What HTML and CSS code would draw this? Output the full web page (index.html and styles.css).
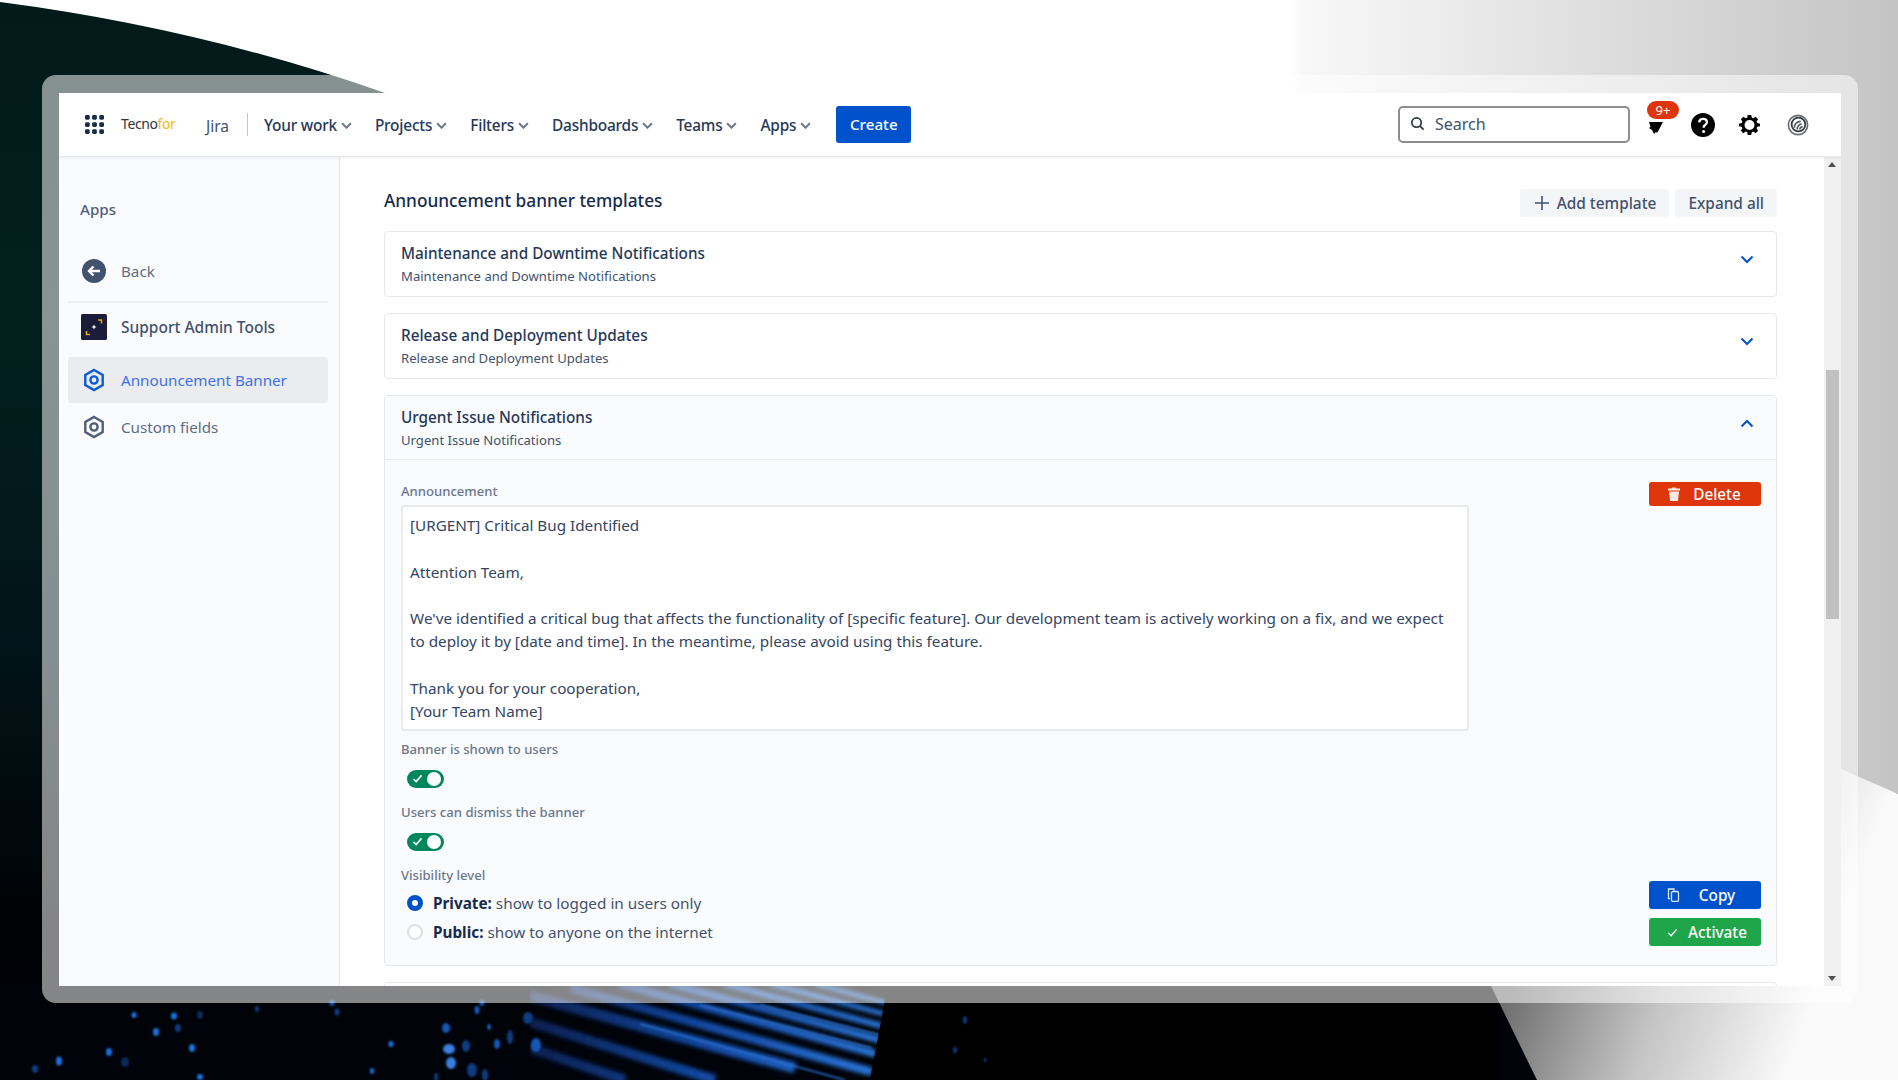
FILE: index.html
```html
<!DOCTYPE html>
<html lang="en">
<head>
<meta charset="utf-8">
<title>Announcement banner templates</title>
<link rel="stylesheet" href="styles.css">
</head>
<body>
<svg class="backdrop" viewBox="0 0 1898 1080" aria-hidden="true">
  <defs>
    <linearGradient id="dark" x1="0" y1="0" x2="0" y2="1">
      <stop offset="0" stop-color="#021a19"/><stop offset=".3" stop-color="#03201f"/>
      <stop offset=".6" stop-color="#021419"/><stop offset=".85" stop-color="#000205"/><stop offset="1" stop-color="#00030a"/>
    </linearGradient>
    <linearGradient id="light" gradientUnits="userSpaceOnUse" x1="1290" y1="0" x2="1898" y2="0">
      <stop offset="0" stop-color="#fff"/><stop offset=".02" stop-color="#f8f8f8"/><stop offset=".5" stop-color="#dedede"/><stop offset="1" stop-color="#c4c4c4"/>
    </linearGradient>
    <linearGradient id="corner" gradientUnits="userSpaceOnUse" x1="1520" y1="960" x2="1790" y2="1060">
      <stop offset="0" stop-color="#6f6f6f"/><stop offset=".5" stop-color="#c4c4c4"/><stop offset="1" stop-color="#f9f9f9"/>
    </linearGradient>
    <linearGradient id="streak" gradientUnits="userSpaceOnUse" x1="530" y1="0" x2="885" y2="0">
      <stop offset="0" stop-color="#071f50"/><stop offset=".5" stop-color="#124aa6"/><stop offset="1" stop-color="#2b78dc"/>
    </linearGradient>
    <clipPath id="streakclip"><polygon points="530,984 888,984 870,1080 530,1080"/></clipPath>
    <filter id="soft"><feGaussianBlur stdDeviation="1"/></filter>
    <filter id="softer"><feGaussianBlur stdDeviation="2"/></filter>
    <filter id="softest"><feGaussianBlur stdDeviation=".8"/></filter>
  </defs>
  <rect width="1898" height="1080" fill="url(#dark)"/>
  <rect x="860" y="960" width="640" height="120" fill="#000"/>
  <path d="M0 2Q200 28 385 93L1000 500L1898 794V0H0Z" fill="url(#light)"/>
  <path d="M1000 500L1841 769L1898 794V1080H1537L1491 986Z" fill="url(#corner)"/>
  <g clip-path="url(#streakclip)" fill="none" stroke="url(#streak)" filter="url(#softer)">
    <path stroke-width="10" d="M530 1048L625 1080"/>
    <path stroke-width="10" d="M530 1022L715 1080"/>
    <path stroke-width="11" d="M530 996L795 1068"/>
    <path stroke-width="9" d="M570 988L872 1072"/>
    <path stroke-width="8" d="M620 984L876 1054"/>
    <path stroke-width="7" d="M670 984L880 1040"/>
    <path stroke-width="6" d="M725 984L882 1026"/>
    <path stroke-width="5" d="M770 984L884 1014"/>
    <path stroke-width="4" d="M815 984L886 1003"/>
  </g>
  <g clip-path="url(#streakclip)" fill="none" stroke="#2f74d4" stroke-width="1.500" filter="url(#softest)">
    <path d="M700 1005L872 1048"/>
    <path d="M760 1005L880 1035"/>
    <path d="M640 1024L845 1080"/>
  </g>
  <g fill="#1a72e0" filter="url(#soft)">
    <ellipse cx="134" cy="1015" rx="2.500" ry="3"/><ellipse cx="174" cy="1016" rx="3" ry="3.500"/>
    <ellipse cx="156" cy="1032" rx="3" ry="4"/><ellipse cx="109" cy="1052" rx="3" ry="4"/>
    <ellipse cx="59" cy="1061" rx="3" ry="4.500"/><ellipse cx="192" cy="1048" rx="3" ry="4"/>
    <ellipse cx="449" cy="1049" rx="6" ry="5" fill="#3b7fe0"/><ellipse cx="451" cy="1063" rx="5" ry="6" fill="#3b7fe0"/>
    <ellipse cx="391" cy="1044" rx="2.500" ry="3"/><ellipse cx="372" cy="1071" rx="2" ry="3"/>
    <ellipse cx="200" cy="1077" rx="3" ry="3"/><ellipse cx="446" cy="1028" rx="4" ry="5" fill="#1458b8"/>
    <ellipse cx="497" cy="1044" rx="3" ry="5" fill="#1458b8"/><ellipse cx="536" cy="1045" rx="5" ry="7" fill="#1458b8"/>
    <ellipse cx="489" cy="1027" rx="1.500" ry="3"/><ellipse cx="477" cy="1010" rx="2.500" ry="4" fill="#1458b8"/>
    <ellipse cx="482" cy="1003" rx="2.500" ry="3" fill="#1458b8"/><ellipse cx="332" cy="1003" rx="2.500" ry="3" fill="#1458b8"/>
  </g>
  <g fill="#0c3c80" filter="url(#soft)">
    <ellipse cx="178" cy="1028" rx="3" ry="4"/><ellipse cx="200" cy="1015" rx="3" ry="4" fill="#0a2a58"/>
    <ellipse cx="257" cy="1009" rx="2" ry="3"/><ellipse cx="337" cy="1012" rx="2.500" ry="3.500"/>
    <ellipse cx="466" cy="1046" rx="4" ry="6"/><ellipse cx="510" cy="1037" rx="3" ry="7"/>
    <ellipse cx="528" cy="1018" rx="5" ry="6"/><ellipse cx="472" cy="1070" rx="5" ry="7"/>
    <ellipse cx="485" cy="1075" rx="3" ry="6"/><ellipse cx="436" cy="1077" rx="2" ry="4"/>
    <ellipse cx="35" cy="1069" rx="3" ry="4"/><ellipse cx="125" cy="1062" rx="4" ry="5" fill="#0a2a58"/>
    <ellipse cx="965" cy="1020" rx="2" ry="4"/><ellipse cx="955" cy="1050" rx="2" ry="3"/><ellipse cx="985" cy="1060" rx="1.500" ry="2"/>
  </g>
</svg>

<div class="frame">
  <header class="topbar">
    <svg class="grid-icon" viewBox="0 0 20 20" aria-hidden="true">
      <g fill="#172b4d"><rect x="0" y="0" width="5" height="5" rx="1.500"/><rect x="7.500" y="0" width="5" height="5" rx="1.500"/><rect x="15" y="0" width="5" height="5" rx="1.500"/><rect x="0" y="7.500" width="5" height="5" rx="1.500"/><rect x="7.500" y="7.500" width="5" height="5" rx="1.500"/><rect x="15" y="7.500" width="5" height="5" rx="1.500"/><rect x="0" y="15" width="5" height="5" rx="1.500"/><rect x="7.500" y="15" width="5" height="5" rx="1.500"/><rect x="15" y="15" width="5" height="5" rx="1.500"/></g>
    </svg>
    <span class="logo">Tecno<span class="logo-for">for</span></span>
    <span class="product">Jira</span>
    <span class="vrule"></span>
    <nav class="nav">
      <span class="nav-item">Your work<svg class="caret" viewBox="0 0 10 6"><path d="M1 1l4 4 4-4"/></svg></span>
      <span class="nav-item">Projects<svg class="caret" viewBox="0 0 10 6"><path d="M1 1l4 4 4-4"/></svg></span>
      <span class="nav-item">Filters<svg class="caret" viewBox="0 0 10 6"><path d="M1 1l4 4 4-4"/></svg></span>
      <span class="nav-item">Dashboards<svg class="caret" viewBox="0 0 10 6"><path d="M1 1l4 4 4-4"/></svg></span>
      <span class="nav-item">Teams<svg class="caret" viewBox="0 0 10 6"><path d="M1 1l4 4 4-4"/></svg></span>
      <span class="nav-item">Apps<svg class="caret" viewBox="0 0 10 6"><path d="M1 1l4 4 4-4"/></svg></span>
    </nav>
    <button class="create">Create</button>
    <div class="search">
      <svg class="search-icon" viewBox="0 0 16 16"><circle cx="7" cy="7" r="5" /><path d="M10.800 10.800L14.500 14.500"/></svg>
      <span>Search</span>
    </div>
    <div class="bell">
      <svg viewBox="0 0 24 24" class="icon-24"><path d="M5 9h14l-5 9.500c-.6 1.200-1.600 1.200-2.200.4L10 21 8 17l-3-2 1.500-1.200z" fill="#000"/></svg>
      <span class="badge">9+</span>
    </div>
    <svg class="help" viewBox="0 0 24 24"><circle cx="12" cy="12" r="12" fill="#000"/><path d="M8.200 9.300C8.400 7 10 5.800 12.100 5.800c2.200 0 3.800 1.400 3.800 3.300 0 1.600-.9 2.400-2 3.100-.9.600-1.200 1-1.200 2v.6" fill="none" stroke="#fff" stroke-width="2.300"/><circle cx="12.600" cy="18.400" r="1.500" fill="#fff"/></svg>
    <svg class="gear" viewBox="0 0 24 24"><path fill="#000" fill-rule="evenodd" d="M10 1h4l.6 3.100 1.800.8L19 3.100 21.900 6l-1.800 2.600.8 1.800L24 11v3l-3.100.6-.8 1.800 1.800 2.600L19 21.900l-2.600-1.800-1.800.8L14 24h-4l-.6-3.100-1.800-.8L5 21.900 2.100 19l1.800-2.600-.8-1.800L0 14v-3l3.100-.6.8-1.800L2.100 6 5 3.100l2.600 1.800 1.800-.8zM12 6.800a5.700 5.700 0 1 0 0 11.400 5.700 5.700 0 0 0 0-11.400z"/></svg>
    <svg class="avatar" viewBox="0 0 24 24" fill="none"><circle cx="12" cy="12" r="10.500" stroke="#6b6f75" stroke-width="1.800"/><circle cx="12.500" cy="11.500" r="7.500" stroke="#3a3d42" stroke-width="2"/><path d="M8 15c0-4 3-7 7-7M11 17c0-3 2-6 5-6M14 17c0-1.500 1-3 3-3" stroke="#55585e" stroke-width="1.800"/></svg>
  </header>

  <div class="workspace">
    <aside class="sidebar">
      <div class="side-title">Apps</div>
      <div class="side-row back-row">
        <svg class="side-icon" viewBox="0 0 24 24"><circle cx="12" cy="12" r="12" fill="#42526e"/><path d="M18 12H7M11.500 7.500L7 12l4.500 4.500" fill="none" stroke="#fff" stroke-width="2.400"/></svg>
        <span>Back</span>
      </div>
      <div class="side-rule"></div>
      <div class="side-row app-row">
        <svg class="app-icon" viewBox="0 0 26 26"><rect width="26" height="26" rx="1.500" fill="#1b1b3a"/><path d="M17 6h3.500v3.500M9 20.500H5.500V17" fill="none" stroke="#e5a50a" stroke-width="1.600"/><path d="M13 10.500l.8 1.700 1.700.8-1.700.8-.8 1.700-.8-1.700-1.700-.8 1.700-.8z" fill="#fff"/></svg>
        <span>Support Admin Tools</span>
      </div>
      <div class="side-row selected">
        <svg class="hex" viewBox="0 0 24 24"><path d="M12 2l8.700 5v10L12 22l-8.700-5V7z"/><circle cx="12" cy="12" r="3.600"/></svg>
        <span>Announcement Banner</span>
      </div>
      <div class="side-row plain">
        <svg class="hex" viewBox="0 0 24 24"><path d="M12 2l8.700 5v10L12 22l-8.700-5V7z"/><circle cx="12" cy="12" r="3.600"/></svg>
        <span>Custom fields</span>
      </div>
    </aside>

    <main class="main">
      <div class="title-row">
        <h1 class="page-title">Announcement banner templates</h1>
        <div class="title-actions">
          <button class="ghost with-icon"><svg class="plus" viewBox="0 0 14 14"><path d="M7 0v14M0 7h14"/></svg>Add template</button>
          <button class="ghost">Expand all</button>
        </div>
      </div>

      <section class="card">
        <div class="card-head">
          <div><div class="card-title">Maintenance and Downtime Notifications</div><div class="card-sub">Maintenance and Downtime Notifications</div></div>
          <svg class="chev" viewBox="0 0 14 9"><path d="M1.500 1.500L7 7l5.500-5.500"/></svg>
        </div>
      </section>
      <section class="card">
        <div class="card-head">
          <div><div class="card-title">Release and Deployment Updates</div><div class="card-sub">Release and Deployment Updates</div></div>
          <svg class="chev" viewBox="0 0 14 9"><path d="M1.500 1.500L7 7l5.500-5.500"/></svg>
        </div>
      </section>
      <section class="card open">
        <div class="card-head">
          <div><div class="card-title">Urgent Issue Notifications</div><div class="card-sub">Urgent Issue Notifications</div></div>
          <svg class="chev" viewBox="0 0 14 9"><path d="M1.500 7.500L7 2l5.500 5.500"/></svg>
        </div>
        <div class="card-body">
          <div class="form">
            <div class="field-label">Announcement</div>
            <div class="textbox">[URGENT] Critical Bug Identified

Attention Team,

We've identified a critical bug that affects the functionality of [specific feature]. Our development team is actively working on a fix, and we expect to deploy it by [date and time]. In the meantime, please avoid using this feature.

Thank you for your cooperation,
[Your Team Name]</div>
            <div class="field-label">Banner is shown to users</div>
            <div class="toggle"><svg viewBox="0 0 12 10"><path d="M1.500 5.500L4.500 8.500 10.500 1.500"/></svg><span class="knob"></span></div>
            <div class="field-label">Users can dismiss the banner</div>
            <div class="toggle"><svg viewBox="0 0 12 10"><path d="M1.500 5.500L4.500 8.500 10.500 1.500"/></svg><span class="knob"></span></div>
            <div class="field-label">Visibility level</div>
            <div class="radio-row"><span class="radio on"></span><span><b>Private:</b> show to logged in users only</span></div>
            <div class="radio-row"><span class="radio"></span><span><b>Public:</b> show to anyone on the internet</span></div>
          </div>
          <div class="actions">
            <button class="act red"><svg class="act-icon" viewBox="0 0 14 14"><path d="M4.500 1.500l1-1h3l1 1H13v2H1v-2zM2 4.500h10L11 14H3z" fill="#fde9e2"/></svg><span class="act-label">Delete</span></button>
            <div class="act-stack">
              <button class="act blue"><svg class="act-icon" viewBox="0 0 14 14" fill="none" stroke="#dfe8fa" stroke-width="1.300"><path d="M3 10.500H1.500V1h5.500V2.500"/><rect x="4.500" y="3.500" width="7" height="10" rx="1.500"/></svg><span class="act-label">Copy</span></button>
              <button class="act green"><svg class="act-icon small" viewBox="0 0 12 10" fill="none" stroke="#fff" stroke-width="1.500"><path d="M1.500 5.500L4.500 8.500 10.500 1.500"/></svg><span class="act-label tight">Activate</span></button>
            </div>
          </div>
        </div>
      </section>
      <section class="card tail"></section>
    </main>

    <div class="scrollbar">
      <span class="arrow up"></span>
      <span class="thumb"></span>
      <span class="arrow down"></span>
    </div>
  </div>
</div>
</body>
</html>
```

FILE: styles.css
```css
* { box-sizing: border-box; }
html, body { margin: 0; padding: 0; height: 1080px; overflow: hidden; }
body { position: relative; font-family: "Noto Sans", "Open Sans", sans-serif; color: #172b4d; }
button { font-family: inherit; border: 0; cursor: pointer; }

.backdrop { position: absolute; left: 0; top: 0; width: 1898px; height: 1080px; display: block; }

.frame {
  position: relative;
  margin: 75px 0 0 42px;
  width: 1816px;
  height: 928px;
  border: 17px solid rgba(255, 255, 255, .52);
  border-top-width: 18px;
  border-radius: 14px;
  background: #fff;
  background-clip: padding-box;
  display: flex;
  flex-direction: column;
  overflow: hidden;
}

/* top bar */
.topbar {
  height: 64px;
  flex: none;
  display: flex;
  align-items: center;
  padding: 0 32px 0 26px;
  background: #fff;
  border-bottom: 1px solid #e6e8ec;
  box-shadow: 0 1px 3px rgba(9, 30, 66, .08);
  position: relative;
  z-index: 2;
}
.grid-icon { width: 19px; height: 19px; flex: none; }
.logo { margin-left: 17px; font-size: 14px; color: #333; letter-spacing: -.4px; width: 55px; position: relative; top: -1px; }
.logo-for { color: #f2b90f; }
.product { margin-left: 30px; font-size: 15.500px; color: #42526e; width: 23px; top: 1px; position: relative; }
.vrule { margin-left: 18px; width: 1px; height: 23px; background: #c1c7d0; flex: none; }
.nav { display: flex; margin-left: 16px; padding-top: 1px; }
.nav-item { display: flex; align-items: center; font-size: 15.400px; font-weight: 500; color: #253858; letter-spacing: -.2px; margin-right: 23px; white-space: nowrap; }
.caret { width: 11px; height: 7px; margin-left: 4px; fill: none; stroke: #6b778c; stroke-width: 1.800; }
.create { margin-left: 2px; width: 75px; height: 37px; border-radius: 3px; background: #0052cc; color: #fff; font-size: 15.200px; font-weight: 500; padding: 0 0 1px; }
.search {
  margin-left: auto;
  width: 232px; height: 37px;
  border: 2px solid #8b8d91;
  border-radius: 5px;
  display: flex; align-items: center;
  padding: 0 0 2px 10px;
  font-size: 16px; color: #42526e;
}
.search-icon { width: 15px; height: 15px; margin-right: 10px; fill: none; stroke: #2c3440; stroke-width: 1.800; }
.bell { position: relative; width: 24px; height: 24px; margin-left: 14px; }
.icon-24 { width: 24px; height: 24px; display: block; }
.badge { position: absolute; left: 3px; top: -12px; width: 32px; height: 18px; border-radius: 9px; background: #de350b; color: #fff; font-size: 13px; line-height: 18px; text-align: center; }
.help { width: 24px; height: 24px; margin-left: 23px; flex: none; }
.gear { width: 21px; height: 21px; margin-left: 24px; flex: none; }
.avatar { width: 22px; height: 22px; margin-left: 27px; flex: none; }

/* workspace */
.workspace { flex: 1; min-height: 0; display: flex; }
.sidebar { width: 281px; flex: none; background: #fafbfd; border-right: 1px solid #e8eaee; padding: 0 11px 0 9px; }
.side-title { font-size: 15.200px; font-weight: 500; color: #505f79; margin: 41px 0 0 12px; line-height: 22px; }
.side-row { display: flex; align-items: center; font-size: 15.200px; color: #5e6c84; border-radius: 3px; padding-left: 14px; }
.side-row > span { margin-left: 15px; }
.back-row { height: 38px; margin-top: 32px; }
.side-icon { width: 24px; height: 24px; flex: none; }
.side-rule { height: 2px; background: #eceef1; margin-top: 11px; }
.app-row { height: 36px; margin-top: 6px; font-size: 15.500px; font-weight: 500; color: #42526e; }
.app-icon { width: 26px; height: 26px; flex: none; margin-left: -1px; }
.app-row > span { margin-left: 14px; }
.hex { width: 24px; height: 24px; flex: none; fill: none; stroke: #505f79; stroke-width: 2.400; }
.selected { height: 46px; margin-top: 12px; background: #ebecf0; color: #3f72e8; }
.selected .hex { stroke: #0d5bd7; }
.plain { height: 46px; margin-top: 1px; }

/* main */
.main { flex: 1; min-width: 0; overflow: hidden; padding: 31px 47px 0 44px; background: #fff; }
.title-row { display: flex; justify-content: space-between; align-items: flex-start; margin-bottom: 14px; }
.page-title { margin: 1px 0 0; font-size: 17.250px; font-weight: 500; line-height: 24px; color: #172b4d; }
.title-actions { display: flex; gap: 6px; margin-top: 1px; }
.ghost { height: 28px; padding: 0 13px; border-radius: 3px; background: #f4f5f7; color: #42526e; font-size: 15.400px; font-weight: 500; display: flex; align-items: center; }
.with-icon { padding-left: 15px; }
.plus { width: 14px; height: 14px; margin-right: 8px; fill: none; stroke: #42526e; stroke-width: 1.600; }

.card { border: 1px solid #e6e8ec; border-radius: 4px; margin-bottom: 16px; background: #fff; }
.card-head { height: 64px; padding: 10px 16px 0; display: flex; justify-content: space-between; }
.card-title { font-size: 15.300px; font-weight: 500; line-height: 22px; color: #253858; }
.card-sub { font-size: 13.100px; line-height: 22px; margin-top: 1px; color: #42526e; }
.chev { width: 14px; height: 9px; margin: 13px 6px 0 0; fill: none; stroke: #0052cc; stroke-width: 2; }

.open { background: #fafbfd; }
.open .card-head { border-bottom: 1px solid #e6e8ec; background: #fafbfc; }
.card-body { display: flex; justify-content: space-between; padding: 22px 15px 18px 16px; }
.form { width: 1068px; }
.field-label { font-size: 13.100px; line-height: 18px; color: #6b778c; font-weight: 500; }
.textbox {
  margin: 5px 0 9px;
  border: 2px solid #e8eaed;
  border-radius: 3px;
  padding: 7px 16px 7px 7px;
  height: 226px;
  background: #fff;
  font-size: 15.250px;
  line-height: 23.300px;
  color: #344563;
  white-space: pre-line;
}
.toggle { position: relative; width: 37px; height: 18px; border-radius: 9px; background: #00875a; margin: 12px 0 15px 6px; }
.toggle svg { position: absolute; left: 5px; top: 4px; width: 11px; height: 9px; fill: none; stroke: #fff; stroke-width: 1.800; }
.knob { position: absolute; right: 3px; top: 2px; width: 14px; height: 14px; border-radius: 50%; background: #fff; }
.radio-row { display: flex; align-items: center; height: 28px; margin-bottom: 1px; font-size: 15.300px; color: #42526e; padding-left: 6px; }
.field-label + .radio-row { margin-top: 5px; }
.radio-row b { font-weight: 700; color: #172b4d; }
.radio { width: 16px; height: 16px; border-radius: 50%; border: 2px solid #dfe1e6; background: #fff; margin-right: 10px; flex: none; }
.radio.on { border: 5px solid #0052cc; }

.actions { width: 112px; display: flex; flex-direction: column; justify-content: space-between; padding-bottom: 1px; }
.act-stack { display: flex; flex-direction: column; gap: 9px; }
.act { width: 112px; height: 28px; padding: 0; border-radius: 3px; color: #fff; font-size: 15.300px; font-weight: 500; display: flex; align-items: center; }
.red { height: 24px; background: #de350b; }
.blue { background: #0052cc; }
.green { background: #1fa64a; }
.act-icon { width: 14px; height: 14px; margin-left: 18px; flex: none; }
.act-icon.small { width: 11px; height: 9px; margin-left: 18px; }
.act-label { flex: 1; text-align: center; padding-right: 8px; }
.act-label.tight { padding-right: 8px; margin-left: 4px; }

.tail { height: 30px; }

/* scrollbar */
.scrollbar { position: relative; width: 17px; flex: none; background: #f1f1f1; }
.thumb { position: absolute; left: 2px; right: 2px; top: 213px; height: 249px; background: #c1c1c1; }
.arrow { position: absolute; left: 4px; width: 0; height: 0; border-left: 4px solid transparent; border-right: 4px solid transparent; }
.up { top: 5px; border-bottom: 5px solid #505050; }
.down { bottom: 5px; border-top: 5px solid #505050; }
```
